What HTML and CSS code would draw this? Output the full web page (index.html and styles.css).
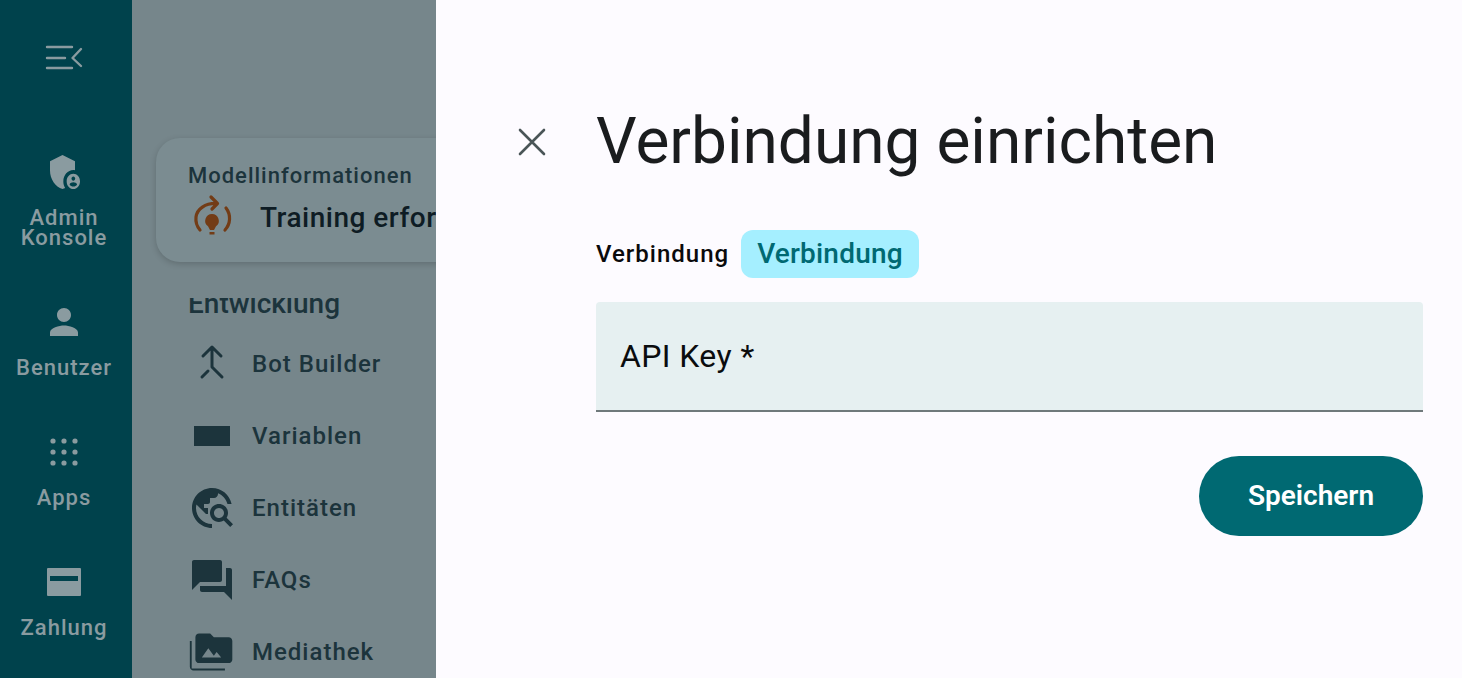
FILE: index.html
```html
<!DOCTYPE html>
<html lang="de">
<head>
    <meta charset="UTF-8">
    <title>Verbindung einrichten</title>
    <link rel="stylesheet" href="styles.css">
</head>
<body>
    <!-- Hauptnavigation -->
    <nav class="rail">
        <button class="rail-toggle" aria-label="Menü">
            <svg width="40" height="40" viewBox="0 0 40 40" fill="none" stroke="currentColor" stroke-width="2.400" stroke-linecap="round" stroke-linejoin="round">
                <path d="M3 9h25M3 20h18M3 30h25M37 11l-8.500 9 8.500 8"/>
            </svg>
        </button>
        <div class="rail-item">
            <svg class="rail-icon" width="40" height="40" viewBox="-0.600 1.410 24 21.200" preserveAspectRatio="none" fill="currentColor"><path d="M17 11c.34 0 .67.04 1 .09V6.270L10.500 3 3 6.270v4.910c0 4.540 3.200 8.790 7.500 9.820.55-.13 1.080-.32 1.600-.55-.69-.98-1.100-2.170-1.100-3.450 0-3.310 2.690-6 6-6zm0 2c-2.210 0-4 1.790-4 4s1.790 4 4 4 4-1.790 4-4-1.790-4-4-4zm0 1.380c.62 0 1.120.51 1.120 1.120s-.51 1.120-1.120 1.120-1.120-.51-1.120-1.120.5-1.120 1.120-1.120zm0 5.370c-.93 0-1.740-.46-2.240-1.170.05-.72 1.510-1.080 2.240-1.080s2.190.36 2.240 1.080c-.5.71-1.310 1.170-2.240 1.170z"/></svg>
            <span class="rail-label">Admin<br>Konsole</span>
        </div>
        <div class="rail-item">
            <svg class="rail-icon" width="40" height="40" viewBox="0.570 0.570 22.860 22.860" fill="currentColor"><path d="M12 12c2.210 0 4-1.790 4-4s-1.790-4-4-4-4 1.790-4 4 1.790 4 4 4zm0 2c-2.670 0-8 1.340-8 4v2h16v-2c0-2.660-5.330-4-8-4z"/></svg>
            <span class="rail-label">Benutzer</span>
        </div>
        <div class="rail-item">
            <svg class="rail-icon" width="40" height="40" viewBox="0 0 40 40" fill="currentColor">
                <circle cx="9" cy="9" r="2.600"/><circle cx="20" cy="9" r="2.600"/><circle cx="31" cy="9" r="2.600"/>
                <circle cx="9" cy="20" r="2.600"/><circle cx="20" cy="20" r="2.600"/><circle cx="31" cy="20" r="2.600"/>
                <circle cx="9" cy="31" r="2.600"/><circle cx="20" cy="31" r="2.600"/><circle cx="31" cy="31" r="2.600"/>
            </svg>
            <span class="rail-label">Apps</span>
        </div>
        <div class="rail-item">
            <svg class="rail-icon" width="40" height="40" viewBox="0 0 40 40">
                <path fill="currentColor" d="M4 6h32a1 1 0 0 1 1 1v26a1 1 0 0 1-1 1H4a1 1 0 0 1-1-1V7a1 1 0 0 1 1-1z"/>
                <rect class="rail-card-stripe" x="6" y="14" width="28" height="5"/>
            </svg>
            <span class="rail-label">Zahlung</span>
        </div>
    </nav>

    <!-- Seitenleiste hinter dem Dialog -->
    <aside class="sidebar">
        <div class="model-card">
            <div class="model-title">Modellinformationen</div>
            <div class="model-status">
                <svg width="48" height="48" viewBox="0 0 48 48" fill="none" stroke="#733c16" stroke-width="3.200" stroke-linecap="round" stroke-linejoin="round">
                    <path d="M12 37A17 17 0 0 1 8 24C9 16 17 10 29 10.500M23 4l6.500 6.500L24 16M38 15A17 17 0 0 1 37 37"/>
                    <path fill="#733c16" stroke="none" d="M24 21a6.800 6.800 0 0 1 4 12.300L26 37h-4l-2-3.700A6.800 6.800 0 0 1 24 21zM21.500 39h5v2.500h-5z"/>
                </svg>
                <span class="model-text">Training erforderlich</span>
            </div>
        </div>

        <section class="dev-section">
            <h3 class="dev-title">Entwicklung</h3>
            <a class="dev-row">
                <svg width="48" height="48" viewBox="0 0 48 48" fill="none" stroke="currentColor" stroke-width="3" stroke-linecap="round" stroke-linejoin="round">
                    <path d="M15 16l9-9 9 9M24 8v19l10 10M14 37l6-6"/>
                </svg>
                <span>Bot Builder</span>
            </a>
            <a class="dev-row">
                <svg width="48" height="48" viewBox="0 0 48 48" fill="currentColor"><rect x="6" y="14" width="36" height="20"/></svg>
                <span>Variablen</span>
            </a>
            <a class="dev-row">
                <svg width="48" height="48" viewBox="0 0 24 24" fill="currentColor"><path d="M19.300 16.900c.4-.7.7-1.500.7-2.400 0-2.500-2-4.500-4.500-4.500S11 12 11 14.500s2 4.500 4.500 4.500c.9 0 1.700-.3 2.400-.7l3.200 3.200 1.400-1.400-3.200-3.200zm-3.800.1c-1.400 0-2.500-1.100-2.500-2.500s1.100-2.500 2.500-2.500 2.500 1.100 2.500 2.500-1.100 2.500-2.500 2.500zM12 20v2C6.480 22 2 17.520 2 12S6.480 2 12 2c4.840 0 8.870 3.440 9.800 8h-2.070c-.64-2.460-2.400-4.470-4.730-5.410V5c0 1.100-.9 2-2 2h-2v2c0 .55-.45 1-1 1H8v2h2v3H9l-4.790-4.790C4.080 10.790 4 11.380 4 12c0 4.410 3.590 8 8 8z"/></svg>
                <span>Entitäten</span>
            </a>
            <a class="dev-row">
                <svg width="48" height="48" viewBox="0 0 24 24" fill="currentColor"><path d="M21 6h-2v9H6v2c0 .55.45 1 1 1h11l4 4V7c0-.55-.45-1-1-1zm-4 6V3c0-.55-.45-1-1-1H3c-.55 0-1 .45-1 1v14l4-4h10c.55 0 1-.45 1-1z"/></svg>
                <span>FAQs</span>
            </a>
            <a class="dev-row">
                <svg width="48" height="48" viewBox="0 -1 26 26" fill="currentColor"><path d="M2 6H1v14c0 1.100.9 2 2 2h17v-1H2V6zm20-2h-8l-2-2H6c-1.100 0-1.990.9-1.990 2L4 16c0 1.100.9 2 2 2h16c1.100 0 2-.9 2-2V6c0-1.100-.9-2-2-2zM7.500 15l3.500-5 3 4 1.500-2 2.500 3H7.500z"/></svg>
                <span>Mediathek</span>
            </a>
        </section>
    </aside>

    <!-- Dialog -->
    <main class="panel">
        <button class="panel-close" aria-label="Schließen">
            <svg width="40" height="40" viewBox="0 0 40 40" fill="none" stroke="currentColor" stroke-width="2.600" stroke-linecap="round">
                <path d="M8 8l24 24M32 8L8 32"/>
            </svg>
        </button>
        <div class="panel-body">
            <h1 class="panel-title">Verbindung einrichten</h1>
            <div class="connection-row">
                <span class="connection-label">Verbindung</span>
                <span class="chip">Verbindung</span>
            </div>
            <div class="field">API Key *</div>
            <div class="actions">
                <button class="save-button">Speichern</button>
            </div>
        </div>
    </main>
</body>
</html>
```

FILE: styles.css
```css
* {
    box-sizing: border-box;
}
html, body {
    height: 100%;
}
body {
    margin: 0;
    display: flex;
    overflow: hidden;
    font-family: Roboto, "Liberation Sans", sans-serif;
    background: #76868b;
}
button {
    font-family: inherit;
    border: none;
    background: none;
    padding: 0;
    cursor: pointer;
}

/* Navigation links */
.rail {
    flex: 0 0 132px;
    display: flex;
    flex-direction: column;
    align-items: center;
    background: #00424c;
    color: #8a9ba0;
    padding: 38px 4px 0 0;
}
.rail-toggle {
    width: 40px;
    height: 40px;
    margin-bottom: 74px;
    color: inherit;
}
.rail-toggle svg {
    display: block;
}
.rail-item {
    display: flex;
    flex-direction: column;
    align-items: center;
    margin-bottom: 55px;
}
.rail-icon {
    display: block;
    margin-bottom: 16px;
}
.rail-label {
    font-size: 22px;
    line-height: 20px;
    font-weight: 500;
    letter-spacing: 1px;
    text-align: center;
    margin-bottom: -1px;
}
.rail-card-stripe {
    fill: #00424c;
}

/* Seitenleiste */
.sidebar {
    flex: 0 0 304px;
    min-width: 0;
    overflow: hidden;
    padding: 138px 0 0 24px;
    color: #1c343c;
}
.model-card {
    width: 400px;
    height: 124px;
    padding: 25px 0 0 32px;
    background: #7b8c91;
    border-radius: 24px;
    box-shadow: 0 2px 6px rgba(0,0,0,0.18);
}
.model-title {
    font-size: 22px;
    line-height: 26px;
    font-weight: 500;
    letter-spacing: 1px;
}
.model-status {
    display: flex;
    align-items: center;
    gap: 24px;
    margin-top: 4px;
}
.model-status svg {
    flex: none;
}
.model-text {
    font-size: 28px;
    font-weight: 500;
    letter-spacing: 0.5px;
    color: #0e1c24;
    white-space: nowrap;
}
.dev-section {
    margin-top: 36px;
    overflow: hidden;
}
.dev-title {
    margin: -8px 0 10px 32px;
    font-size: 28px;
    line-height: 28px;
    font-weight: 500;
}
.dev-row {
    display: flex;
    align-items: center;
    gap: 16px;
    height: 72px;
    padding-left: 32px;
    font-size: 24px;
    font-weight: 500;
    letter-spacing: 1px;
}

/* Dialog */
.panel {
    flex: 1;
    display: flex;
    background: #fdfbff;
    padding: 104px 39px 0 76px;
}
.panel-close {
    flex: none;
    width: 40px;
    height: 76px;
    margin-right: 44px;
    color: #4a5557;
}
.panel-close svg {
    display: block;
}
.panel-body {
    flex: 1;
    min-width: 0;
}
.panel-title {
    margin: 0;
    font-size: 64px;
    line-height: 76px;
    font-weight: 400;
    color: #1a1c1e;
}
.connection-row {
    display: flex;
    align-items: center;
    gap: 12px;
    margin-top: 50px;
}
.connection-label {
    font-size: 24px;
    font-weight: 500;
    letter-spacing: 1px;
    color: #0a0a0c;
}
.chip {
    height: 48px;
    line-height: 48px;
    padding: 0 16px;
    border-radius: 12px;
    background: #a5efff;
    color: #006972;
    font-size: 28px;
    font-weight: 500;
    letter-spacing: 0.2px;
}
.field {
    height: 110px;
    margin-top: 24px;
    padding-left: 24px;
    display: flex;
    align-items: center;
    background: #e6f0f1;
    border-bottom: 2px solid #6f797b;
    border-radius: 4px 4px 0 0;
    font-size: 32px;
    letter-spacing: 0.4px;
    color: #0a0c0e;
}
.actions {
    display: flex;
    justify-content: flex-end;
    margin-top: 44px;
}
.save-button {
    width: 224px;
    height: 80px;
    padding-bottom: 2px;
    border-radius: 40px;
    background: #006972;
    color: #fff;
    font-size: 28px;
    font-weight: 600;
}
```
